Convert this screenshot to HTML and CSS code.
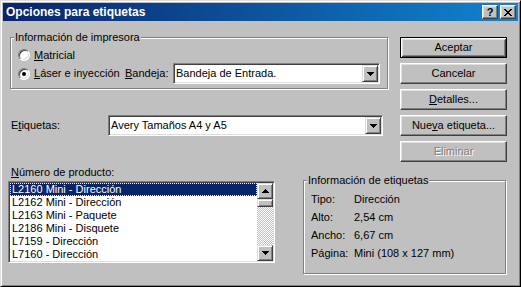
FILE: index.html
```html
<!DOCTYPE html>
<html lang="es">
<head>
<meta charset="utf-8">
<title>Opciones para etiquetas</title>
<link rel="stylesheet" href="styles.css">
</head>
<body>
<div class="window">
  <div class="titlebar">
    <span class="title">Opciones para etiquetas</span>
    <div class="caption-buttons">
      <span class="cbtn help">?</span>
      <span class="cbtn close"><svg width="8" height="7" viewBox="0 0 8 7" shape-rendering="crispEdges"><path d="M0 0h2v1h1v1h2V1h1V0h2v1H7v1H6v1H5v1h1v1h1v1h1v1H6V6H5V5H3v1H2v1H0V6h1V5h1V4h1V3H2V2H1V1H0z"/></svg></span>
    </div>
  </div>
  <div class="content">
    <div class="top">
      <div class="left">
        <div class="group printer">
          <div class="legend">Información de impresora</div>
          <div class="row r1"><span class="radio"></span><span><u>M</u>atricial</span></div>
          <div class="row r2">
            <div class="radio-opt"><span class="radio checked"></span><span><u>L</u>áser e inyección</span></div>
            <span class="bandeja"><u>B</u>andeja:</span>
            <div class="combo combo-tray">
              <span class="combo-text">Bandeja de Entrada.</span>
              <span class="arrow-btn"><svg width="7" height="4" shape-rendering="crispEdges"><rect x="0" y="0" width="7" height="1"/><rect x="1" y="1" width="5" height="1"/><rect x="2" y="2" width="3" height="1"/><rect x="3" y="3" width="1" height="1"/></svg></span>
            </div>
          </div>
        </div>
        <div class="etq-row">
          <span class="etq-label">E<u>t</u>iquetas:</span>
          <div class="combo combo-labels">
            <span class="combo-text">Avery Tamaños A4 y A5</span>
            <span class="arrow-btn"><svg width="7" height="4" shape-rendering="crispEdges"><rect x="0" y="0" width="7" height="1"/><rect x="1" y="1" width="5" height="1"/><rect x="2" y="2" width="3" height="1"/><rect x="3" y="3" width="1" height="1"/></svg></span>
          </div>
        </div>
      </div>
      <div class="buttons">
        <div class="btn default">Aceptar</div>
        <div class="btn">Cancelar</div>
        <div class="btn"><span><u>D</u>etalles...</span></div>
        <div class="btn"><span>Nue<u>v</u>a etiqueta...</span></div>
        <div class="btn disabled">Eliminar</div>
      </div>
    </div>
    <div class="bottom">
      <div class="product">
        <span class="product-label"><u>N</u>úmero de producto:</span>
        <div class="listbox">
          <div class="items">
            <div class="item sel">L2160 Mini - Dirección</div>
            <div class="item">L2162 Mini - Dirección</div>
            <div class="item">L2163 Mini - Paquete</div>
            <div class="item">L2186 Mini - Disquete</div>
            <div class="item">L7159 - Dirección</div>
            <div class="item">L7160 - Dirección</div>
          </div>
          <div class="scrollbar">
            <span class="sb-btn"><svg width="7" height="4" shape-rendering="crispEdges"><rect x="3" y="0" width="1" height="1"/><rect x="2" y="1" width="3" height="1"/><rect x="1" y="2" width="5" height="1"/><rect x="0" y="3" width="7" height="1"/></svg></span>
            <span class="thumb"></span>
            <span class="track"></span>
            <span class="sb-btn"><svg width="7" height="4" shape-rendering="crispEdges"><rect x="0" y="0" width="7" height="1"/><rect x="1" y="1" width="5" height="1"/><rect x="2" y="2" width="3" height="1"/><rect x="3" y="3" width="1" height="1"/></svg></span>
          </div>
        </div>
      </div>
      <div class="group info">
        <div class="legend">Información de etiquetas</div>
        <div class="info-rows">
          <div class="info-row"><span class="key">Tipo:</span><span>Dirección</span></div>
          <div class="info-row"><span class="key">Alto:</span><span>2,54 cm</span></div>
          <div class="info-row"><span class="key">Ancho:</span><span>6,67 cm</span></div>
          <div class="info-row"><span class="key">Página:</span><span>Mini (108 x 127 mm)</span></div>
        </div>
      </div>
    </div>
  </div>
</div>
</body>
</html>
```
FILE: styles.css
```css
body {
  margin: 0;
  background: #c0c0c0;
  font-family: "Liberation Sans", Arial, sans-serif;
  font-size: 11px;
  line-height: 13px;
  color: #000;
}

.window {
  width: 521px;
  height: 287px;
  box-sizing: border-box;
  background: #c0c0c0;
  border: 1px solid;
  border-color: #dfdfdf #000 #000 #dfdfdf;
  box-shadow: inset 1px 1px #fff, inset -1px -1px #808080;
  padding: 2px;
  display: flex;
  flex-direction: column;
}

.titlebar {
  height: 18px;
  flex: none;
  background: linear-gradient(90deg, #0a246a, #1084d0);
  display: flex;
  align-items: center;
  justify-content: space-between;
  padding: 0 2px 0 3px;
}

.title {
  color: #fff;
  font-weight: bold;
  font-size: 12px;
}

.caption-buttons {
  display: flex;
  gap: 2px;
}

.cbtn {
  width: 16px;
  height: 14px;
  box-sizing: border-box;
  background: #c0c0c0;
  border: 1px solid;
  border-color: #fff #404040 #404040 #fff;
  box-shadow: inset -1px -1px #808080, inset 1px 1px #dfdfdf;
  display: flex;
  align-items: center;
  justify-content: center;
}

.help {
  font-weight: bold;
  font-size: 11px;
  line-height: 11px;
}

.close svg {
  display: block;
}

.content {
  flex: 1;
  padding: 16px 11px 0 5px;
}

.top {
  display: flex;
  justify-content: space-between;
}

.left {
  width: 380px;
}

.group {
  border: 1px solid #808080;
  box-shadow: inset 1px 1px #fff, 1px 1px #fff;
  box-sizing: border-box;
}

.legend {
  margin: -7px 0 0 3px;
  padding: 0 1px;
  width: max-content;
  background: #c0c0c0;
  line-height: 13px;
}

.printer {
  margin-left: 2px;
  width: 378px;
  padding-bottom: 4px;
}

.row {
  display: flex;
  align-items: center;
  padding-left: 7px;
}

.r1 {
  height: 16px;
  margin-top: 3px;
}

.r2 {
  height: 21px;
}

.radio {
  width: 12px;
  height: 12px;
  box-sizing: border-box;
  border-radius: 50%;
  border: 1px solid;
  border-color: #808080 #fff #fff #808080;
  background: #fff;
  box-shadow: inset 1px 1px #404040, inset -1px -1px #dfdfdf;
  margin-right: 4px;
  display: flex;
  align-items: center;
  justify-content: center;
  flex: none;
}

.radio.checked::after {
  content: "";
  width: 4px;
  height: 4px;
  border-radius: 50%;
  background: #000;
}

.radio-opt {
  width: 107px;
  display: flex;
  align-items: center;
}

.bandeja {
  width: 48px;
}

.combo {
  height: 21px;
  box-sizing: border-box;
  border: 1px solid;
  border-color: #808080 #fff #fff #808080;
  box-shadow: inset 1px 1px #404040, inset -1px -1px #dfdfdf;
  background: #fff;
  padding: 1px;
  display: flex;
}

.combo-tray {
  width: 207px;
}

.combo-labels {
  width: 275px;
}

.combo-text {
  flex: 1;
  padding-left: 1px;
  line-height: 17px;
  white-space: nowrap;
}

.arrow-btn,
.sb-btn {
  width: 16px;
  box-sizing: border-box;
  background: #c0c0c0;
  border: 1px solid;
  border-color: #dfdfdf #404040 #404040 #dfdfdf;
  box-shadow: inset 1px 1px #fff, inset -1px -1px #808080;
  display: flex;
  align-items: center;
  justify-content: center;
  flex: none;
}

.arrow-btn {
  height: 17px;
}

.sb-btn {
  height: 16px;
}

.arrow-btn svg,
.sb-btn svg {
  display: block;
}

.etq-row {
  display: flex;
  align-items: center;
  margin-top: 26px;
}

.etq-label {
  margin-left: 3px;
  width: 97px;
}

.buttons {
  width: 107px;
  display: flex;
  flex-direction: column;
  gap: 5px;
}

.btn {
  height: 21px;
  box-sizing: border-box;
  background: #c0c0c0;
  border: 1px solid;
  border-color: #fff #404040 #404040 #fff;
  box-shadow: inset -1px -1px #808080, inset 1px 1px #dfdfdf;
  display: flex;
  align-items: center;
  justify-content: center;
}

.btn.default {
  border-color: #000;
  box-shadow: inset 1px 1px #fff, inset -1px -1px #404040, inset 2px 2px #dfdfdf, inset -2px -2px #808080;
}

.btn.disabled {
  color: #808080;
  text-shadow: 1px 1px #fff;
}

.bottom {
  display: flex;
  align-items: flex-start;
  margin-top: 4px;
}

.product {
  width: 267px;
}

.product-label {
  display: block;
  margin-left: 3px;
  line-height: 13px;
}

.listbox {
  margin-top: 2px;
  height: 82px;
  box-sizing: border-box;
  border: 1px solid;
  border-color: #808080 #fff #fff #808080;
  box-shadow: inset 1px 1px #404040, inset -1px -1px #dfdfdf;
  background: #fff;
  padding: 1px;
  display: flex;
}

.items {
  flex: 1;
  overflow: hidden;
}

.item {
  height: 13px;
  line-height: 13px;
  padding-left: 2px;
  white-space: nowrap;
}

.item.sel {
  background: #0a246a;
  color: #fff;
  outline: 1px dotted #ffff80;
  outline-offset: -1px;
}

.scrollbar {
  width: 16px;
  display: flex;
  flex-direction: column;
}

.thumb {
  height: 8px;
  box-sizing: border-box;
  background: #c0c0c0;
  border: 1px solid;
  border-color: #dfdfdf #404040 #404040 #dfdfdf;
  box-shadow: inset 1px 1px #fff, inset -1px -1px #808080;
}

.track {
  flex: 1;
  background: repeating-conic-gradient(#c0c0c0 0 25%, #fff 0 50%) 0 0 / 2px 2px;
}

.info {
  margin-top: 14px;
  margin-left: 28px;
  width: 203px;
  height: 94px;
}

.info-rows {
  margin-top: 3px;
  padding-left: 7px;
}

.info-row {
  height: 18px;
  display: flex;
  align-items: center;
}

.key {
  width: 43px;
}
```
